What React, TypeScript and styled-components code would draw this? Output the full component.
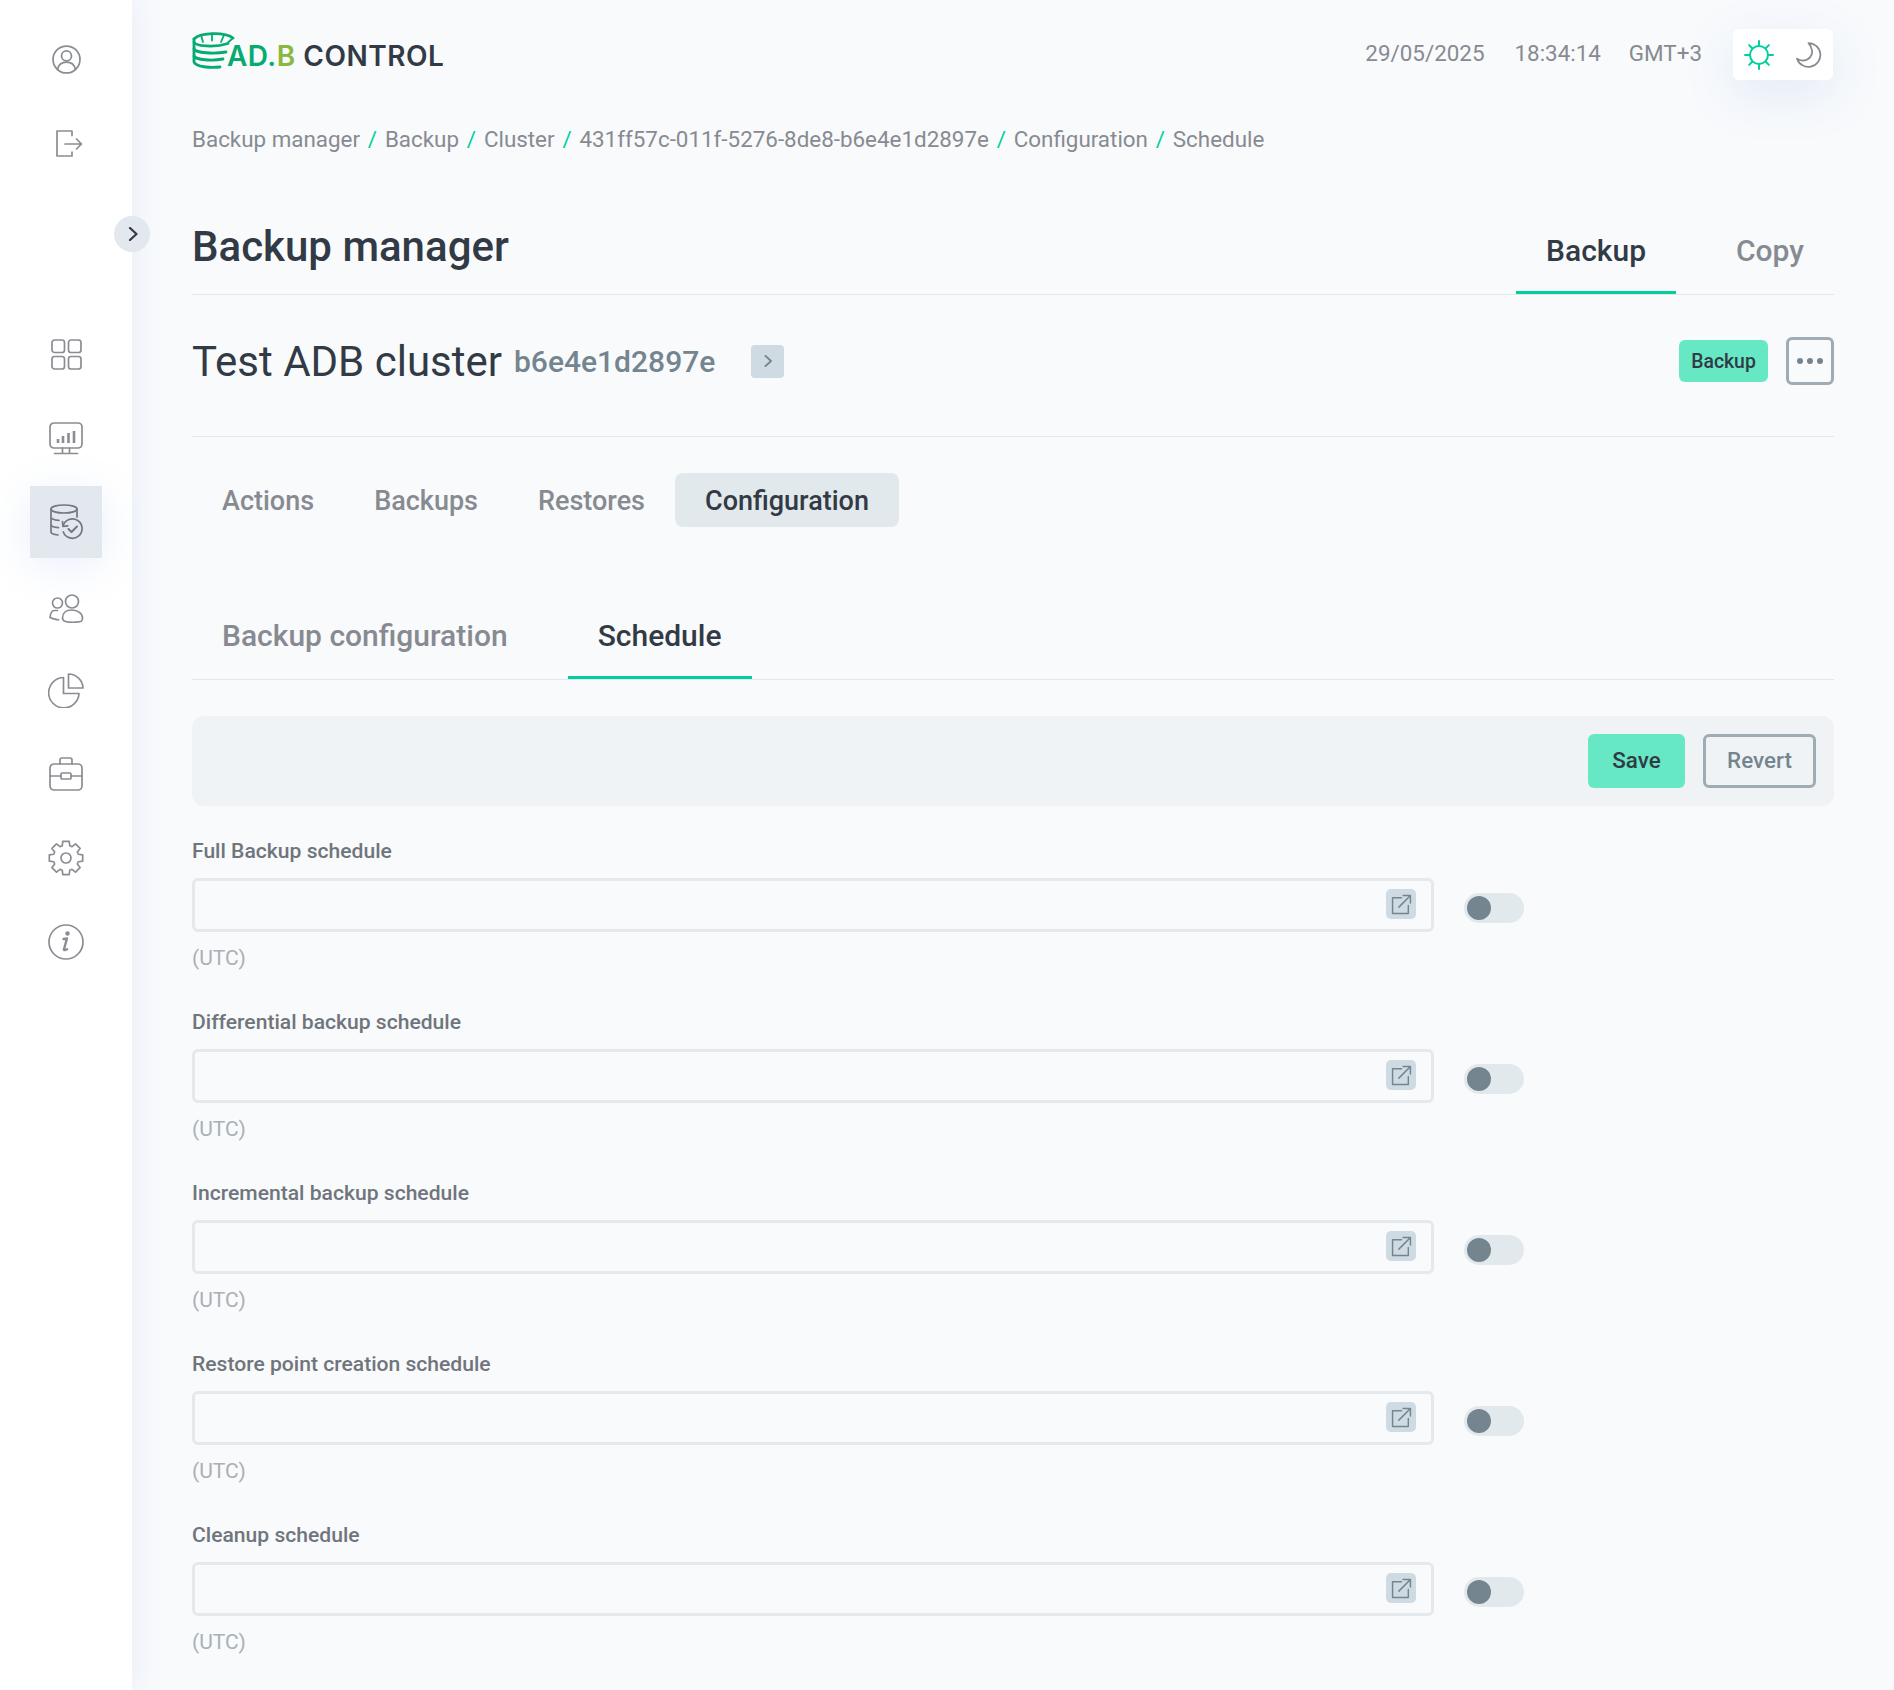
import React from "react";
import styled, { createGlobalStyle } from "styled-components";

const GlobalStyle = createGlobalStyle`
  html, body { margin: 0; padding: 0; background: #f8fafc; }
  body { font-family: Roboto, "Liberation Sans", sans-serif; color: #323a45; }
  * { box-sizing: border-box; }
`;

const Shell = styled.div`
  display: flex;
  min-height: 1690px;
`;

// left rail with the icon buttons
const Sidebar = styled.aside`
  position: relative;
  flex: 0 0 132px;
  padding-top: 23px;
  background: #fff;
  box-shadow: 6px 0 24px rgba(130, 165, 215, 0.1);
  display: flex;
  flex-direction: column;
  align-items: center;
`;

const NavGroup = styled.nav<{ $top?: number }>`
  display: flex;
  flex-direction: column;
  gap: 12px;
  margin-top: ${(p) => p.$top ?? 0}px;
`;

const NavItem = styled.a<{ $active?: boolean; $shift?: number; $drop?: number }>`
  width: 72px;
  height: 72px;
  display: flex;
  align-items: center;
  justify-content: center;
  color: ${(p) => (p.$active ? "#74787e" : "#8a8d93")};
  background: ${(p) => (p.$active ? "#e2e8ed" : "transparent")};
  box-shadow: ${(p) => (p.$active ? "0 8px 40px rgba(120, 155, 225, 0.16)" : "none")};
  padding-left: ${(p) => p.$shift ?? 0}px;
  padding-top: ${(p) => p.$drop ?? 0}px;
`;

const CollapseButton = styled.button`
  position: absolute;
  top: 216px;
  right: -18px;
  width: 36px;
  height: 36px;
  padding: 0 0 0 1px;
  border: none;
  border-radius: 50%;
  background: #e2e8ee;
  color: #323a45;
  display: flex;
  align-items: center;
  justify-content: center;
`;

const Icon = styled.svg<{ $w?: number; $color?: string }>`
  display: block;
  fill: none;
  stroke: ${(p) => p.$color ?? "currentColor"};
  stroke-width: ${(p) => p.$w ?? 1.7};
  stroke-linecap: round;
  stroke-linejoin: round;
  flex: none;
`;

const Main = styled.main`
  flex: 1;
  min-width: 0;
  padding: 29px 60px 35px;
`;

const TopBar = styled.header`
  display: flex;
  align-items: center;
  justify-content: space-between;
  height: 51px;
`;

const LogoLink = styled.a`
  display: flex;
  align-items: flex-end;
  padding-bottom: 7px;
`;

const LogoMark = styled.svg`
  display: block;
  fill: none;
  stroke: #05ab6f;
  stroke-width: 2.8;
  stroke-linecap: round;
  stroke-linejoin: round;
  margin-right: -9px;
`;

const LogoText = styled.span`
  margin-bottom: -1px;
  font-family: Inter, "Liberation Sans", sans-serif;
  font-size: 28px;
  font-weight: 600;
  line-height: 30px;
  letter-spacing: 0.5px;
  color: #323a45;
  white-space: pre;
`;

const LogoGreen = styled.span<{ $light?: boolean }>`
  color: ${(p) => (p.$light ? "#8ab83c" : "#05ab6f")};
`;

const Clock = styled.div`
  display: flex;
  align-items: center;
  gap: 30px;
  margin-right: 1px;
  font-size: 22.4px;
  color: #878b91;
`;

const ClockPart = styled.span<{ $tight?: boolean; $wide?: boolean }>`
  padding-bottom: 3px;
  margin-right: ${(p) => (p.$tight ? -2 : p.$wide ? 1 : 0)}px;
`;

const ThemeSwitch = styled.div`
  width: 100px;
  height: 51px;
  padding: 0 11px;
  display: flex;
  align-items: center;
  justify-content: space-between;
  background: #fff;
  border-radius: 6px;
  box-shadow: 0 14px 50px rgba(120, 155, 225, 0.16);
`;

const Crumbs = styled.div`
  margin-top: 44px;
  height: 30px;
  display: flex;
  align-items: center;
  gap: 7.8px;
  font-size: 22.4px;
  color: #878b91;
`;

const CrumbSep = styled.span`
  color: #00d09e;
`;

const PageHead = styled.div`
  margin-top: 40px;
  height: 101px;
  display: flex;
  align-items: flex-end;
  justify-content: space-between;
  border-bottom: 1px solid #e3e7eb;
`;

const PageTitle = styled.h1`
  margin: 0 0 23px;
  font-size: 42px;
  line-height: 48px;
  font-weight: 500;
  color: #323a45;
`;

const TabRow = styled.div<{ $rule?: boolean }>`
  display: flex;
  gap: 30px;
  ${(p) => (p.$rule ? "border-bottom: 1px solid #e3e7eb;" : "")}
`;

const LineTab = styled.a<{ $active?: boolean }>`
  height: 87px;
  padding: 2px 30px 0;
  display: flex;
  align-items: center;
  font-size: 30px;
  font-weight: 500;
  color: ${(p) => (p.$active ? "#323a45" : "#878b91")};
  border-bottom: 3px solid ${(p) => (p.$active ? "#00d09e" : "transparent")};
`;

const ClusterRow = styled.div`
  height: 142px;
  padding-bottom: 9px;
  display: flex;
  align-items: center;
  border-bottom: 1px solid #e3e7eb;
`;

const ClusterName = styled.h2`
  margin: 0;
  font-size: 42px;
  font-weight: 400;
  color: #323a45;
`;

const ClusterId = styled.span`
  margin-left: 12px;
  font-size: 30px;
  font-weight: 500;
  color: #74858f;
`;

const SquareButton = styled.button`
  width: 33px;
  height: 33px;
  margin-left: 36px;
  padding: 0;
  border: none;
  border-radius: 4px;
  background: #cfdbe2;
  color: #74858f;
  display: flex;
  align-items: center;
  justify-content: center;
`;

const ClusterActions = styled.div`
  margin-left: auto;
  display: flex;
  align-items: center;
  gap: 18px;
`;

const Tag = styled.span`
  width: 89px;
  height: 42px;
  display: flex;
  align-items: center;
  justify-content: center;
  border-radius: 6px;
  background: #66e8c5;
  font-size: 19.4px;
  font-weight: 500;
  color: #323a45;
`;

const DotsButton = styled.button`
  width: 48px;
  height: 48px;
  padding: 0;
  border: 3px solid #a0acb3;
  border-radius: 6px;
  background: transparent;
  display: flex;
  align-items: center;
  justify-content: center;
  gap: 4px;
`;

const Dot = styled.i`
  width: 6px;
  height: 6px;
  border-radius: 50%;
  background: #74858f;
`;

const PillTabs = styled.div`
  margin-top: 36px;
  display: flex;
`;

const PillTab = styled.a<{ $active?: boolean }>`
  height: 54px;
  padding: 1px 30px 0;
  display: flex;
  align-items: center;
  border-radius: 8px;
  font-size: 27px;
  font-weight: 500;
  color: ${(p) => (p.$active ? "#323a45" : "#878b91")};
  background: ${(p) => (p.$active ? "#e2e9ec" : "transparent")};
`;

const SubTabs = styled(TabRow)`
  margin-top: 65px;
`;

const Toolbar = styled.div`
  margin-top: 36px;
  height: 90px;
  padding: 0 18px;
  display: flex;
  align-items: center;
  justify-content: flex-end;
  gap: 18px;
  border-radius: 12px;
  background: #eff3f6;
`;

const SaveButton = styled.button`
  width: 97px;
  height: 54px;
  padding: 0 0 2px;
  border: none;
  border-radius: 6px;
  background: #66e8c5;
  font-family: inherit;
  font-size: 22.4px;
  font-weight: 500;
  color: #323a45;
`;

const RevertButton = styled.button`
  width: 113px;
  height: 54px;
  padding: 0 0 2px;
  border: 3px solid #a0acb3;
  border-radius: 6px;
  background: transparent;
  font-family: inherit;
  font-size: 22.4px;
  font-weight: 500;
  color: #74858f;
`;

const Form = styled.form`
  margin-top: 30px;
  display: flex;
  flex-direction: column;
  gap: 36px;
`;

const Field = styled.div`
  display: flex;
  flex-direction: column;
`;

const FieldLabel = styled.label`
  height: 28px;
  line-height: 30px;
  font-size: 21.1px;
  font-weight: 500;
  color: #70757c;
`;

const FieldRow = styled.div`
  margin-top: 14px;
  display: flex;
  align-items: center;
  gap: 30px;
`;

const InputBox = styled.div`
  width: 1242px;
  height: 54px;
  display: flex;
  align-items: center;
  border: 3px solid #e3e9ed;
  border-radius: 6px;
`;

const TextInput = styled.input`
  flex: 1;
  min-width: 0;
  height: 100%;
  border: none;
  outline: none;
  background: transparent;
`;

const CronButton = styled.button`
  width: 30px;
  height: 30px;
  margin: 0 15px 2px 0;
  padding: 0;
  border: none;
  border-radius: 5px;
  background: #cfdbe2;
  color: #75858f;
  display: flex;
  align-items: center;
  justify-content: center;
`;

const Toggle = styled.span`
  width: 60px;
  height: 30px;
  margin-top: 5px;
  padding: 0 3px;
  display: flex;
  align-items: center;
  border-radius: 15px;
  background: #e2e9ec;
`;

const ToggleKnob = styled.i`
  width: 24px;
  height: 24px;
  border-radius: 50%;
  background: #74858f;
`;

const Hint = styled.div`
  margin-top: 11px;
  height: 28px;
  line-height: 30px;
  font-size: 21px;
  color: #a9b0b6;
`;

// eight toothed gear outline, radii taken from the reference
const gearPath = (() => {
  const c = 18;
  const pts: string[] = [];
  for (let i = 0; i < 8; i++) {
    const a = (i * Math.PI) / 4 - Math.PI / 2;
    const at = (r: number, d: number) =>
      `${(c + r * Math.cos(a + d)).toFixed(2)} ${(c + r * Math.sin(a + d)).toFixed(2)}`;
    pts.push(at(12.8, -0.3), at(17, -0.19), at(17, 0.19), at(12.8, 0.3));
  }
  return `M${pts.join(" L")} Z`;
})();

const sunRays = [0, 45, 90, 135, 180, 225, 270, 315];

const UserIcon = () => (
  <Icon width="29" height="29" viewBox="0 0 28 28">
    <circle cx="14" cy="14" r="13" />
    <circle cx="14" cy="10.5" r="4.8" />
    <path d="M5.5 23.5c.8-5 4.2-7 8.5-7s7.7 2 8.5 7" />
  </Icon>
);

const LogoutIcon = () => (
  <Icon width="28" height="28" viewBox="0 0 28 28">
    <path d="M17 5.5V1H2v25h15v-4" />
    <path d="M10 14h16.5M21.5 9l5 5-5 5" />
  </Icon>
);

const GridIcon = () => (
  <Icon width="31" height="31" viewBox="0 0 31 31">
    <rect x="1" y="1" width="12.5" height="12.5" rx="2.5" />
    <rect x="17.5" y="1" width="12.5" height="12.5" rx="2.5" />
    <rect x="1" y="17.5" width="12.5" height="12.5" rx="2.5" />
    <rect x="17.5" y="17.5" width="12.5" height="12.5" rx="2.5" />
  </Icon>
);

const MonitorIcon = () => (
  <Icon width="34" height="33" viewBox="0 0 34 33">
    <rect x="1" y="1" width="32" height="25" rx="4" />
    <path d="M13.5 26v5.5M20.5 26v5.5M5.5 31.5h23" />
    <path strokeWidth="2.6" strokeLinecap="butt" d="M9 21v-4M14 21v-7M19.5 21V11M25 21V9" />
  </Icon>
);

const BackupIcon = () => (
  <Icon width="33" height="36" viewBox="0 0 33 36">
    <ellipse cx="14" cy="5" rx="13" ry="4" />
    <path d="M1 5v23c0 1.5 3 2.6 7 3M1 13c0 1.7 3 3 8 3.4M1 20.5c0 1.7 3 2.8 7.5 3.2M27 5v8" />
    <path d="M13 22a9.7 9.7 0 1 1 .3 6" />
    <path d="M12.5 17.5l.5 4.8 4.8-.4" />
    <path strokeWidth="2" d="M18.5 25l3 3 5.5-5.5" />
  </Icon>
);

const PeopleIcon = () => (
  <Icon width="35" height="29" viewBox="0 0 35 29">
    <circle cx="8.5" cy="9" r="5" />
    <circle cx="23" cy="7.5" r="6.5" />
    <path d="M8.5 16.5H5c-2 0-3.5 3-4 7 2 1 5 1.8 8.500 2.3" />
    <path d="M13.5 24c0-5 3.5-8 9-8s11 3 11 8c0 1.5-1 3.5-2 3.5-5 1-11 1-15 0-2-.5-3-2-3-3.5z" />
  </Icon>
);

const PieIcon = () => (
  <Icon width="36" height="35" viewBox="0 0 36 35">
    <path d="M15.5 4.5A15.2 15.2 0 1 0 31 20.5H15.5z" />
    <path d="M20.5 1A14.5 14.5 0 0 1 35 15H20.5z" />
  </Icon>
);

const CaseIcon = () => (
  <Icon width="34" height="34" viewBox="0 0 34 34">
    <rect x="1" y="7" width="32" height="26" rx="4" />
    <path d="M11 7V3c0-1.5.5-2 2-2h8c1.500 0 2 .5 2 2v4" />
    <path d="M1 19h11M22 19h11" />
    <rect x="12" y="16" width="10" height="6" rx="1" />
  </Icon>
);

const GearIcon = () => (
  <Icon width="36" height="36" viewBox="0 0 36 36">
    <path d={gearPath} />
    <circle cx="18" cy="18" r="5" />
  </Icon>
);

const InfoIcon = () => (
  <Icon width="36" height="36" viewBox="0 0 36 36">
    <circle cx="18" cy="18" r="17" />
    <path strokeWidth="2.4" d="M15.5 15l3.500-.5-3 10.500c-.3 1.500 1 1.500 3 .2" />
    <circle cx="19.5" cy="9.5" r="1.4" fill="currentColor" />
  </Icon>
);

const ChevronRight = ({ size = 14 }: { size?: number }) => (
  <Icon width={size} height={size} viewBox="0 0 14 14" $w={2.2}>
    <path d="M4 1l6.500 6L4 13" />
  </Icon>
);

const LogoIcon = () => (
  <LogoMark width="44" height="38" viewBox="0 0 44 38">
    <path d="M2 7C9 0 33 0 41 6" />
    <path strokeWidth="1.8" d="M9 3l2 7M20 1.500v7M32 3l-3 7M41 6l-5 4.500" />
    <path d="M2 7v3c1 4 20 6 34 1.500" />
    <path d="M2 10v7c2 4 20 5 32 3" />
    <path d="M2 17v7c2 4 18 5 29 3" />
    <path d="M2 24v6c2 5 16 6 26 5" />
  </LogoMark>
);

const SunIcon = () => (
  <Icon width="30" height="30" viewBox="0 0 30 30" $color="#00d09e" $w={2}>
    <circle cx="15" cy="15" r="9" />
    {sunRays.map((deg) => (
      <path key={deg} d="M15 1v4.500" transform={`rotate(${deg} 15 15)`} />
    ))}
  </Icon>
);

const MoonIcon = () => (
  <Icon width="26" height="26" viewBox="0 0 25 25">
    <path d="M12 1a11.500 11.500 0 1 1-11 15c1.500 1.200 3.500 1.800 5.500 1.800 6 0 9.500-5 9-9.300C15 5.500 14 3 12 1z" />
  </Icon>
);

const ExternalIcon = () => (
  <Icon width="21" height="21" viewBox="0 0 20 20" $w={1.4}>
    <path d="M10 3.500H1.500v15h15V11" />
    <path d="M7.500 12.500L18.500 1.500M11.500 1.500h7v7" />
  </Icon>
);

const crumbs = [
  "Backup manager",
  "Backup",
  "Cluster",
  "431ff57c-011f-5276-8de8-b6e4e1d2897e",
  "Configuration",
  "Schedule",
];

const schedules = [
  "Full Backup schedule",
  "Differential backup schedule",
  "Incremental backup schedule",
  "Restore point creation schedule",
  "Cleanup schedule",
];

export default function App() {
  return (
    <Shell>
      <GlobalStyle />
      <Sidebar>
        <NavGroup>
          <NavItem><UserIcon /></NavItem>
          <NavItem $shift={6} $drop={2}><LogoutIcon /></NavItem>
        </NavGroup>
        <CollapseButton><ChevronRight /></CollapseButton>
        <NavGroup $top={139}>
          <NavItem><GridIcon /></NavItem>
          <NavItem><MonitorIcon /></NavItem>
          <NavItem $active><BackupIcon /></NavItem>
          <NavItem $drop={5}><PeopleIcon /></NavItem>
          <NavItem><PieIcon /></NavItem>
          <NavItem><CaseIcon /></NavItem>
          <NavItem><GearIcon /></NavItem>
          <NavItem><InfoIcon /></NavItem>
        </NavGroup>
      </Sidebar>
      <Main>
        <TopBar>
          <LogoLink>
            <LogoIcon />
            <LogoText>
              <LogoGreen>AD.</LogoGreen>
              <LogoGreen $light>B</LogoGreen> CONTROL
            </LogoText>
          </LogoLink>
          <Clock>
            <ClockPart>29/05/2025</ClockPart>
            <ClockPart $tight>18:34:14</ClockPart>
            <ClockPart $wide>GMT+3</ClockPart>
            <ThemeSwitch>
              <SunIcon />
              <MoonIcon />
            </ThemeSwitch>
          </Clock>
        </TopBar>
        <Crumbs>
          {crumbs.map((c, i) => (
            <React.Fragment key={c}>
              {i > 0 && <CrumbSep>/</CrumbSep>}
              <span>{c}</span>
            </React.Fragment>
          ))}
        </Crumbs>
        <PageHead>
          <PageTitle>Backup manager</PageTitle>
          <TabRow>
            <LineTab $active>Backup</LineTab>
            <LineTab>Copy</LineTab>
          </TabRow>
        </PageHead>
        <ClusterRow>
          <ClusterName>Test ADB cluster</ClusterName>
          <ClusterId>b6e4e1d2897e</ClusterId>
          <SquareButton><ChevronRight size={12} /></SquareButton>
          <ClusterActions>
            <Tag>Backup</Tag>
            <DotsButton><Dot /><Dot /><Dot /></DotsButton>
          </ClusterActions>
        </ClusterRow>
        <PillTabs>
          <PillTab>Actions</PillTab>
          <PillTab>Backups</PillTab>
          <PillTab>Restores</PillTab>
          <PillTab $active>Configuration</PillTab>
        </PillTabs>
        <SubTabs $rule>
          <LineTab>Backup configuration</LineTab>
          <LineTab $active>Schedule</LineTab>
        </SubTabs>
        <Toolbar>
          <SaveButton type="button">Save</SaveButton>
          <RevertButton type="button">Revert</RevertButton>
        </Toolbar>
        <Form>
          {schedules.map((label) => (
            <Field key={label}>
              <FieldLabel>{label}</FieldLabel>
              <FieldRow>
                <InputBox>
                  <TextInput />
                  <CronButton type="button"><ExternalIcon /></CronButton>
                </InputBox>
                <Toggle><ToggleKnob /></Toggle>
              </FieldRow>
              <Hint>(UTC)</Hint>
            </Field>
          ))}
        </Form>
      </Main>
    </Shell>
  );
}
